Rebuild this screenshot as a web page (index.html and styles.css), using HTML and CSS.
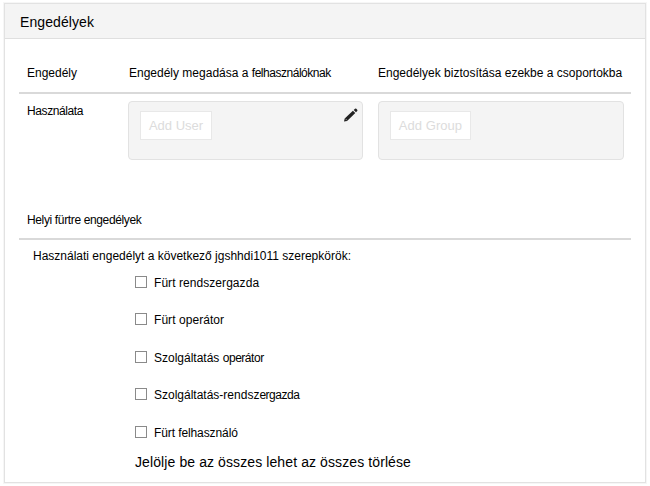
FILE: index.html
```
<!DOCTYPE html>
<html lang="hu">
<head>
<meta charset="utf-8">
<title>Engedélyek</title>
<link rel="stylesheet" href="styles.css">
</head>
<body>
<section class="panel">
  <header class="panel-header"><h1>Engedélyek</h1></header>
  <div class="panel-body">
    <div class="row head">
      <span class="permission">Engedély</span>
      <span class="users">Engedély megadása a <span class="tight">felhasználóknak</span></span>
      <span class="groups">Engedélyek biztosítása ezekbe a csoportokba</span>
    </div>
    <div class="row entry">
      <span class="usage">Használata</span>
      <div class="box">
        <button class="add" type="button">Add User</button>
        <svg class="pencil" width="14" height="14" viewBox="0 0 14 14"><path d="M0 13.6l.7-3.2L8.9 2.7l2.4 2.4L3.1 12.9zM9.7 2l1.3-1.2q.7-.5 1.3 0l.9.9q.6.6 0 1.3L12 4.3z" fill="#222"/><path d="M1.5 10.8l1.5 1.5" stroke="#aaa" stroke-width=".8"/></svg>
      </div>
      <div class="box">
        <button class="add add-group" type="button">Add Group</button>
      </div>
    </div>
    <h2 class="local">Helyi fürtre engedélyek</h2>
    <p class="intro">Használati engedélyt a következő jgshhdi1011 szerepkörök:</p>
    <div class="roles">
      <label class="role"><input type="checkbox"><span class="r1">Fürt rendszergazda</span></label>
      <label class="role"><input type="checkbox"><span class="r2">Fürt operátor</span></label>
      <label class="role"><input type="checkbox"><span>Szolgáltatás <span class="tight">operátor</span></span></label>
      <label class="role"><input type="checkbox"><span>Szolgáltatás-rendsz<span class="tight">ergazda</span></span></label>
      <label class="role"><input type="checkbox"><span class="r5">Fürt felhasználó</span></label>
    </div>
    <p class="toggle-all">Jelölje be az összes lehet az összes törlése</p>
  </div>
</section>
</body>
</html>
```
FILE: styles.css
```
* { box-sizing: border-box; }
body {
  margin: 0;
  padding: 3px 4px;
  background: #fff;
  color: #000;
  font: 12px/16px "Liberation Sans", Arial, sans-serif;
  white-space: nowrap;
}
h1, h2, p { margin: 0; font-weight: normal; }
.panel { height: 480px; border: 1px solid #e2e2e2; box-shadow: 0 0 0 1px #f6f6f6; }
.panel-header {
  height: 35px;
  padding: 9px 15px;
  border-bottom: 1px solid #dfdfdf;
  background: #f4f4f4;
}
h1 { font-size: 14px; line-height: 18px; letter-spacing: .08px; }
.panel-body { padding: 0 14px; }
.row { display: grid; grid-template-columns: 109px 235px 246px; }
.row > :nth-child(3) { margin-left: 15px; margin-right: -15px; }
.head { height: 55px; padding-top: 26px; border-bottom: 2px solid #d9d9d9; }
.head > span { padding-left: 1px; }
.head > .permission { padding-left: 8px; }
.head > .groups { padding-left: 0; }
.tight { letter-spacing: -.47px; }
.entry { height: 110px; padding-top: 7px; }
.usage { padding: 2px 0 0 8px; letter-spacing: -.4px; }
.box {
  display: flex;
  justify-content: space-between;
  height: 59px;
  padding: 9px 4px 0 11px;
  border: 1px solid #e2e2e2;
  border-radius: 4px;
  background: #f4f4f4;
}
.add {
  width: 72px;
  height: 29px;
  padding: 0;
  border: 1px solid #e8e8e8;
  background: #fff;
  color: #dcdcdc;
  font: 13px/16px "Liberation Sans", Arial, sans-serif;
}
.add-group { width: 81px; letter-spacing: .05px; }
.pencil { margin-top: -3px; }
.local {
  height: 36px;
  padding: 8px 0 0 8px;
  border-bottom: 2px solid #d9d9d9;
  font-size: 12px;
  letter-spacing: -.36px;
}
.intro { padding: 8px 0 0 14px; }
.roles { padding: .3px 0 0 116px; }
.role { display: flex; align-items: center; height: 37.4px; }
.role input {
  appearance: none;
  width: 12px;
  height: 12px;
  margin: -2px 7px 0 0;
  border: 1px solid #8a8a8a;
  background: #fff;
}
.r1, .r2 { letter-spacing: .06px; }
.r5 { letter-spacing: -.1px; }
.toggle-all { padding: 2.7px 0 0 116px; font-size: 14px; letter-spacing: .1px; }
```
